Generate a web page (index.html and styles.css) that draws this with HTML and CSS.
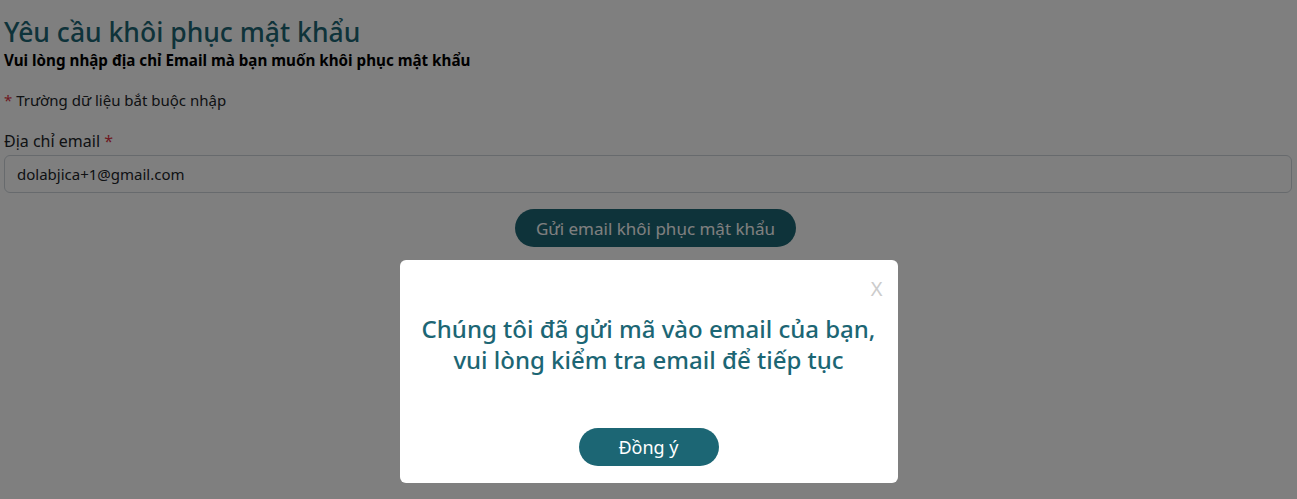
FILE: index.html
```
<!DOCTYPE html>
<html lang="vi">
<head>
    <meta charset="UTF-8">
    <meta name="viewport" content="width=device-width, initial-scale=1.0">
    <title>Yêu cầu khôi phục mật khẩu</title>
    <link rel="stylesheet" href="styles.css">
</head>
<body>
    <div class="page">
        <h1>Yêu cầu khôi phục mật khẩu</h1>
        <p class="subtitle">Vui lòng nhập địa chỉ Email mà bạn muốn khôi phục mật khẩu</p>

        <p class="note"><span class="req">*</span> Trường dữ liệu bắt buộc nhập</p>

        <div class="form-group">
            <label for="email">Địa chỉ email <span class="req">*</span></label>
            <input type="email" id="email" value="dolabjica+1@gmail.com">
        </div>

        <div class="actions">
            <button class="btn-send">Gửi email khôi phục mật khẩu</button>
        </div>
    </div>

    <div class="overlay">
        <div class="modal">
            <span class="close">X</span>
            <p class="message">Chúng tôi đã gửi mã vào email của bạn,<br>vui lòng kiểm tra email để tiếp tục</p>
            <button class="btn-ok">Đồng ý</button>
        </div>
    </div>
</body>
</html>
```

FILE: styles.css
```
body {
    margin: 0;
    font-family: "Noto Sans", "Open Sans", sans-serif;
    background-color: white;
    color: #212529;
}
.page {
    padding: 14px 5px 0 4px;
}
h1 {
    margin: 0;
    font-size: 26.5px;
    font-weight: 500;
    color: #1c6674;
    line-height: 36px;
}
.subtitle {
    margin: 0;
    font-size: 15.2px;
    font-weight: bold;
    color: #000;
    line-height: 20px;
}
.note {
    margin: 18px 0 0;
    font-size: 15px;
    line-height: 24px;
}
.req {
    color: #dc3545;
}
.form-group {
    margin-top: 17px;
}
label {
    display: block;
    font-size: 16px;
    line-height: 24px;
    margin-bottom: 2px;
}
input[type="email"] {
    display: block;
    width: 100%;
    box-sizing: border-box;
    height: 38px;
    padding: 6px 12px;
    border: 1px solid #ced4da;
    border-radius: 6px;
    font-family: inherit;
    font-size: 15px;
    color: #212529;
}
.actions {
    display: flex;
    justify-content: center;
    margin-top: 16px;
    padding-left: 15px;
}
.btn-send {
    background-color: #1c6674;
    color: white;
    border: none;
    border-radius: 20px;
    height: 38px;
    padding: 0 21px;
    font-family: inherit;
    font-size: 17px;
}
.overlay {
    position: fixed;
    inset: 0;
    background: rgba(0, 0, 0, 0.5);
    display: flex;
    justify-content: center;
    align-items: flex-start;
}
.modal {
    position: relative;
    margin-top: 260px;
    width: 498px;
    height: 223px;
    box-sizing: border-box;
    background: white;
    border-radius: 6px;
    text-align: center;
    padding-top: 53px;
}
.close {
    position: absolute;
    top: 15px;
    right: 15px;
    color: #ccc;
    font-size: 20px;
}
.message {
    margin: 0;
    font-size: 24px;
    font-weight: 500;
    line-height: 31px;
    color: #1c6674;
}
.btn-ok {
    margin-top: 53px;
    width: 140px;
    height: 38px;
    border: none;
    border-radius: 19px;
    background-color: #1c6674;
    color: white;
    font-family: inherit;
    font-size: 18px;
}
```
